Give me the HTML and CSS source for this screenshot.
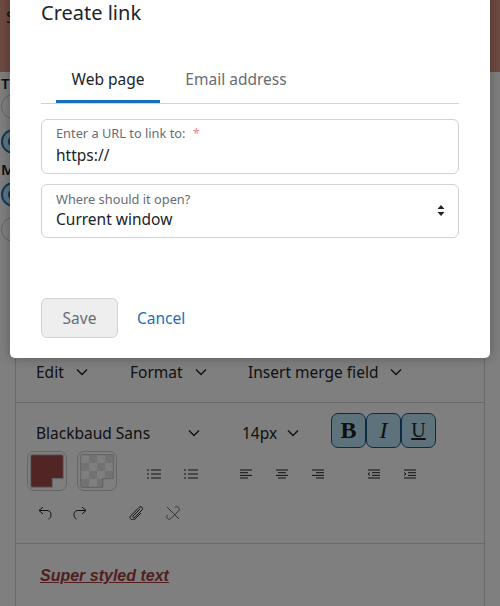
FILE: index.html
```html
<!DOCTYPE html>
<html lang="en">
<head>
  <meta charset="UTF-8">
  <title>Create link</title>
  <link rel="stylesheet" href="styles.css">
</head>
<body>

  <!-- Page behind the modal -->
  <div class="band"><span class="band-text">S</span></div>

  <div class="options">
    <div class="opt-label">T</div>
    <div class="radio"></div>
    <div class="radio radio-on"></div>
    <div class="opt-label opt-label-second">M</div>
    <div class="radio radio-on"></div>
    <div class="radio"></div>
  </div>

  <div class="editor">
    <div class="menubar">
      <span class="menu-item menu-edit">Edit <svg class="chev" viewBox="0 0 12 8"><path d="M1 1.5l5 5 5-5"/></svg></span>
      <span class="menu-item menu-format">Format <svg class="chev" viewBox="0 0 12 8"><path d="M1 1.5l5 5 5-5"/></svg></span>
      <span class="menu-item">Insert merge field <svg class="chev" viewBox="0 0 12 8"><path d="M1 1.5l5 5 5-5"/></svg></span>
    </div>

    <div class="toolbar">
      <div class="tool-row tool-row-font">
        <span class="font-pick">Blackbaud Sans <svg class="chev" viewBox="0 0 12 8"><path d="M1 1.5l5 5 5-5"/></svg></span>
        <span class="size-pick">14px <svg class="chev" viewBox="0 0 12 8"><path d="M1 1.5l5 5 5-5"/></svg></span>
        <div class="style-btns">
          <span class="style-btn style-b">B</span>
          <span class="style-btn style-i">I</span>
          <span class="style-btn style-u">U</span>
        </div>
      </div>

      <div class="tool-row tool-row-format">
        <span class="swatch">
          <svg class="swatch-fill" viewBox="0 0 33 33"><path class="swatch-red" d="M1.500 3a1.500 1.500 0 0 1 1.500-1.500h27a1.500 1.500 0 0 1 1.500 1.500v20.500h-10v8H3a1.500 1.500 0 0 1-1.500-1.500z"/></svg>
        </span>
        <span class="swatch swatch-second">
          <span class="swatch-check"></span>
          <svg class="swatch-fill swatch-line" viewBox="0 0 33 33"><path d="M1.500 3a1.500 1.500 0 0 1 1.500-1.500h27a1.500 1.500 0 0 1 1.500 1.500v20.500h-10v8H3a1.500 1.500 0 0 1-1.500-1.500z"/></svg>
        </span>

        <svg class="ico ico-list1" viewBox="0 0 14 10"><path d="M4 1h10M4 5h10M4 9h10M0 1h2M0 5h2M0 9h2"/></svg>
        <svg class="ico ico-list2" viewBox="0 0 14 10"><path d="M4 1h10M4 5h10M4 9h10M1 0v2M0 5h2M0 9h2"/></svg>

        <svg class="ico ico-al1" viewBox="0 0 12 10"><path d="M0 1h12M0 3.700h8M0 6.400h12M0 9h8"/></svg>
        <svg class="ico ico-al2" viewBox="0 0 12 10"><path d="M0 1h12M2 3.700h8M0 6.400h12M2 9h8"/></svg>
        <svg class="ico ico-al3" viewBox="0 0 12 10"><path d="M0 1h12M4 3.700h8M0 6.400h12M4 9h8"/></svg>

        <svg class="ico ico-in1" viewBox="0 0 13 10"><path d="M1 1h12M5 3.700h8M5 6.400h8M1 9h12M3 3.500L1 5l2 1.500"/></svg>
        <svg class="ico ico-in2" viewBox="0 0 13 10"><path d="M1 1h12M5 3.700h8M5 6.400h8M1 9h12M1 3.500L3 5 1 6.500"/></svg>
      </div>

      <div class="tool-row tool-row-misc">
        <svg class="ico-b ico-undo" viewBox="0 0 14 14"><path d="M5 1L1 4.500l4 3.500M1 4.500h8c2.500 0 4 1.500 4 4s-1 4-2.500 4.500"/></svg>
        <svg class="ico-b ico-redo" viewBox="0 0 14 14"><path d="M9 1l4 3.500-4 3.500M13 4.500H5c-2.500 0-4 1.500-4 4s1 4 2.500 4.500"/></svg>
        <svg class="ico-b ico-clip" viewBox="0 0 16 14"><path d="M11 3L4 10c-1 1 .5 2.500 1.500 1.500L13 4c2-2-1-4.500-3-2.500L2 9.500c-3 3 1.500 6 4 3.500L12 7"/></svg>
        <svg class="ico-b ico-unlink" viewBox="0 0 14 14"><path d="M1 1l12 12M9 1.500c1-1 2.500-1 3.500 0s1 2.500 0 3.500L5 12.500c-1 1-2.500 1-3.500 0s-1-2.500 0-3.500"/></svg>
      </div>
    </div>

    <div class="editor-body"><a class="styled-text">Super styled text</a></div>
  </div>

  <div class="overlay"></div>

  <!-- Modal -->
  <div class="modal">
    <h2 class="modal-title">Create link</h2>

    <div class="tabs">
      <span class="tab tab-active">Web page</span>
      <span class="tab">Email address</span>
    </div>

    <div class="field">
      <label class="field-label">Enter a URL to link to: <span class="req">*</span></label>
      <div class="field-value">https://</div>
    </div>

    <div class="field field-select">
      <label class="field-label">Where should it open?</label>
      <div class="field-value">Current window</div>
      <svg class="select-caret" viewBox="0 0 8 11"><path d="M4 0l3.500 4H.5zM4 11L.5 7h7z"/></svg>
    </div>

    <div class="modal-actions">
      <button class="btn-save" disabled>Save</button>
      <a class="btn-cancel">Cancel</a>
    </div>
  </div>

</body>
</html>
```

FILE: styles.css
```css
html, body {
  height: 606px;
}

body {
  margin: 0;
  overflow: hidden;
  position: relative;
  background: #fff;
  color: #212327;
  font-family: "Noto Sans", sans-serif;
  font-size: 15.5px;
}

/* page behind */
.band {
  height: 72px;
  background: #dc9484;
  padding-left: 6px;
  box-sizing: border-box;
  font-size: 17px;
  line-height: 34px;
}

.options {
  height: 268px;
  box-sizing: border-box;
  padding: 1px 0 0 1px;
  overflow: hidden;
}

.opt-label {
  font-weight: 600;
  font-size: 15px;
  line-height: 20px;
  margin-bottom: 1px;
}

.opt-label-second {
  margin-top: -5px;
  margin-bottom: 3px;
}

.radio {
  width: 23px;
  height: 23px;
  border: 1px solid #c5c5c5;
  border-radius: 50%;
  margin-bottom: 10px;
  position: relative;
}

.radio-on {
  border: 2px solid #1870b8;
  width: 21px;
  height: 21px;
  background: #c1e8fb;
}

.radio-on::after {
  content: "";
  position: absolute;
  left: 5px;
  top: 5px;
  width: 11px;
  height: 11px;
  border-radius: 50%;
  background: #1870b8;
}

.editor {
  margin: 0 15px;
  border-left: 1px solid #d2d2d2;
  border-right: 1px solid #d2d2d2;
}

.menubar {
  height: 63px;
  box-sizing: border-box;
  padding: 20px 0 0 20px;
  line-height: 24px;
  border-bottom: 1px solid #d2d2d2;
  display: flex;
  align-items: flex-start;
}

.menu-item {
  display: flex;
  align-items: center;
  white-space: nowrap;
}

.menu-edit {
  width: 94px;
}

.menu-format {
  width: 118px;
}

.chev {
  width: 12px;
  height: 8px;
  margin-left: 12px;
  fill: none;
  stroke: #212327;
  stroke-width: 1.4;
}

.toolbar {
  height: 141px;
  box-sizing: border-box;
  border-bottom: 1px solid #d2d2d2;
  padding: 10px 0 0 11px;
}

.tool-row {
  display: flex;
  align-items: center;
}

.tool-row-font {
  height: 35px;
  padding-left: 9px;
}

.font-pick {
  width: 206px;
  padding-top: 4px;
  display: flex;
  align-items: center;
  white-space: nowrap;
}

.font-pick .chev {
  margin-left: 38px;
}

.size-pick {
  width: 89px;
  padding-top: 4px;
  display: flex;
  align-items: center;
  white-space: nowrap;
}

.size-pick .chev {
  margin-left: 10px;
}

.style-btns {
  display: flex;
}

.style-btn {
  width: 33px;
  height: 33px;
  border: 1px solid #14588e;
  border-radius: 7px;
  background: #bde4f8;
  font-family: "Liberation Serif", serif;
  font-size: 24px;
  line-height: 32px;
  text-align: center;
}

.style-b {
  font-weight: bold;
}

.style-i {
  font-style: italic;
}

.style-u {
  font-size: 20px;
  text-decoration: underline;
}

.tool-row-format {
  height: 40px;
  margin-top: 3px;
}

.swatch {
  width: 38px;
  height: 38px;
  border: 1px solid #cdcdcd;
  border-radius: 7px;
  display: flex;
  align-items: center;
  justify-content: center;
  flex: none;
  position: relative;
}

.swatch-second {
  margin-left: 10px;
}

.swatch-fill {
  width: 36px;
  height: 36px;
}

.swatch-fill path {
  stroke: #cdcdcd;
  stroke-width: 1;
}

.swatch-red {
  fill: #a44a4a;
}

.swatch-check {
  position: absolute;
  left: 3px;
  top: 3px;
  width: 33px;
  height: 33px;
  background: repeating-conic-gradient(#e4e4e4 0 25%, #fff 0 50%) 0 0 / 16px 16px;
  clip-path: polygon(0 0, 100% 0, 100% 69%, 69% 69%, 69% 100%, 0 100%);
}

.swatch-line {
  position: relative;
}

.swatch-line path {
  fill: none;
}

.ico {
  height: 10px;
  flex: none;
  margin-top: 6px;
  fill: none;
  stroke: #212327;
  stroke-width: 1;
}

.ico-list1 { width: 14px; margin-left: 30px; }
.ico-list2 { width: 14px; margin-left: 23px; }
.ico-al1 { width: 12px; margin-left: 42px; }
.ico-al2 { width: 12px; margin-left: 24px; }
.ico-al3 { width: 12px; margin-left: 24px; }
.ico-in1 { width: 13px; margin-left: 43px; }
.ico-in2 { width: 13px; margin-left: 23px; }

.tool-row-misc {
  height: 22px;
  margin-top: 11px;
}

.ico-b {
  width: 14px;
  height: 14px;
  flex: none;
  fill: none;
  stroke: #212327;
  stroke-width: 1;
}

.ico-undo { margin-left: 11px; }
.ico-redo { margin-left: 21px; }
.ico-clip { width: 16px; margin-left: 42px; }
.ico-unlink { margin-left: 21px; opacity: 0.7; }

.editor-body {
  padding: 20px 24px;
}

.styled-text {
  font-family: "Liberation Sans", sans-serif;
  font-size: 16px;
  font-style: italic;
  font-weight: bold;
  color: #a23e3e;
  text-decoration: underline;
}

/* dim layer + modal */
.overlay {
  position: absolute;
  inset: 0;
  background: rgba(0, 0, 0, 0.5);
}

.modal {
  position: absolute;
  left: 10px;
  top: -20px;
  width: 480px;
  height: 378px;
  box-sizing: border-box;
  padding: 19px 31px 0;
  background: #fff;
  border-radius: 5px;
  box-shadow: 0 0 12px rgba(0, 0, 0, 0.3);
}

.modal-title {
  margin: 0;
  font-size: 20px;
  font-weight: 400;
  line-height: 27px;
}

.tabs {
  margin-top: 34px;
  height: 43px;
  border-bottom: 1px solid #d2d2d2;
  padding-left: 15px;
  display: flex;
}

.tab {
  width: 104px;
  height: 43px;
  box-sizing: border-box;
  margin-right: 24px;
  line-height: 38px;
  text-align: center;
  color: #686c73;
  white-space: nowrap;
}

.tab-active {
  color: #212327;
  border-bottom: 3px solid #1870b8;
}

.field {
  margin-top: 15px;
  height: 55px;
  box-sizing: border-box;
  border: 1px solid #d2d2d2;
  border-radius: 6px;
  padding: 5px 14px 0;
  position: relative;
}

.field-select {
  margin-top: 10px;
  height: 54px;
  padding-top: 6px;
}

.field-label {
  display: block;
  font-size: 12.800px;
  line-height: 16px;
  color: #686c73;
}

.req {
  color: #f08585;
  margin-left: 4px;
}

.field-value {
  margin-top: 3px;
  line-height: 22px;
}

.field-select .field-value {
  margin-top: 1px;
}

.select-caret {
  position: absolute;
  right: 13px;
  top: 20px;
  width: 8px;
  height: 11px;
  fill: #212327;
}

.modal-actions {
  margin-top: 60px;
  display: flex;
  align-items: center;
}

.btn-save {
  width: 77px;
  height: 40px;
  border: 1px solid #d2d2d2;
  border-radius: 6px;
  background: #eeeeef;
  color: #686c73;
  font-family: "Noto Sans", sans-serif;
  font-size: 15.5px;
}

.btn-cancel {
  margin-left: 19px;
  color: #1a6fc0;
}
```
